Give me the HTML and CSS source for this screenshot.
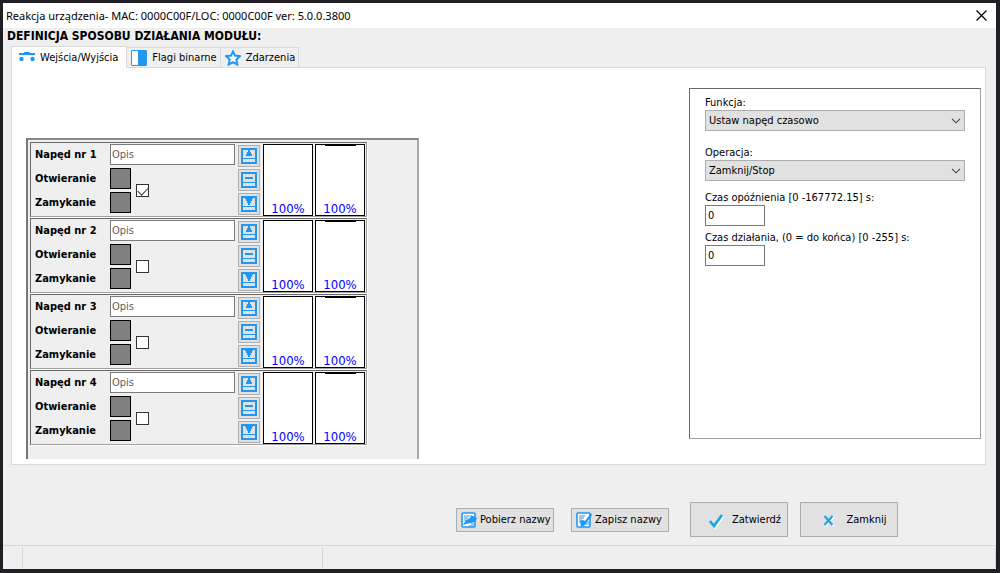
FILE: index.html
```html
<!DOCTYPE html>
<html lang="pl">
  <head>
    <meta charset="UTF-8" />
    <meta name="viewport" content="width=device-width, initial-scale=1.0" />
    <title>Reakcja urządzenia</title>
    <link rel="stylesheet" href="styles.css">
  </head>
  <body>
    <svg class="symbols" aria-hidden="true">
      <symbol id="icon-up" viewBox="0 0 16 16">
        <path d="M0 0h16v16H0zM2 2v8h12V2zM2 11v3h12v-3z" fill-rule="evenodd" />
        <path d="M7 2h2v2h1v2h1v2H5V6h1V4h1z" />
      </symbol>
      <symbol id="icon-stop" viewBox="0 0 16 16">
        <path d="M0 0h16v16H0zM2 2v8h12V2zM2 11v3h12v-3z" fill-rule="evenodd" />
        <path d="M4 5h8v2H4z" />
      </symbol>
      <symbol id="icon-down" viewBox="0 0 16 16">
        <path d="M0 0h16v16H0zM2 2v8h12V2zM2 11v3h12v-3z" fill-rule="evenodd" />
        <path d="M4 2h8v1h-1v2h-1v2H9v2H7V7H6V5H5V3H4z" />
      </symbol>
      <symbol id="icon-chevron" viewBox="0 0 10 6">
        <path d="M1 .8l4 4 4-4" fill="none" stroke="#444" stroke-width="1.1" />
      </symbol>
    </svg>

    <div class="window">
      <header class="titlebar">
        <span class="title">Reakcja urządzenia- MAC: 0000C00F/LOC: 0000C00F ver: 5.0.0.3800</span>
        <button class="close" type="button" aria-label="Zamknij okno">
          <svg width="11" height="11" viewBox="0 0 11 11"><path d="M.5 .5l10 10M10.5 .5l-10 10" stroke="#000" stroke-width="1.2" /></svg>
        </button>
      </header>

      <h1 class="heading">DEFINICJA SPOSOBU DZIAŁANIA MODUŁU:</h1>

      <div class="tabs" role="tablist">
        <button class="tab active" type="button" role="tab" aria-selected="true">
          <svg width="16" height="16" viewBox="0 0 16 16">
            <path d="M5 2h6v1h5v2H0V3h5z" />
            <circle cx="2.500" cy="9" r="2.200" />
            <circle cx="13.500" cy="9" r="2.200" />
          </svg>
          Wejścia/Wyjścia
        </button>
        <button class="tab" type="button" role="tab" aria-selected="false">
          <svg width="16" height="16" viewBox="0 0 16 16">
            <path d="M1 0h14l1 1v14l-1 1H1l-1-1V1z" />
            <path d="M1 1h6v14H1z" fill="#fff" />
          </svg>
          Flagi binarne
        </button>
        <button class="tab" type="button" role="tab" aria-selected="false">
          <svg width="16" height="16" viewBox="0 0 16 16">
            <path d="M8 1.400l1.900 4.200 5 .6-3.600 3.300 1 5.100L8 12.200l-4.300 2.400 1-5.100L1.100 6.200l5-.6z" fill="#fff" stroke="#2196f3" stroke-width="2" />
          </svg>
          Zdarzenia
        </button>
      </div>

      <main class="page">
        <div class="drives">
          <div class="drive">
            <label class="drive-label" for="drive-1">Napęd nr 1</label>
            <input class="drive-name" id="drive-1" type="text" placeholder="Opis">
            <div class="drive-label">Otwieranie</div>
            <div class="lamp"></div>
            <div class="drive-label">Zamykanie</div>
            <div class="lamp"></div>
            <div class="drive-check"><input type="checkbox" aria-label="Napęd nr 1 aktywny" checked></div>
            <div class="drive-buttons">
              <button type="button" aria-label="Otwórz"><svg><use href="#icon-up" /></svg></button>
              <button type="button" aria-label="Stop"><svg><use href="#icon-stop" /></svg></button>
              <button type="button" aria-label="Zamknij"><svg><use href="#icon-down" /></svg></button>
            </div>
            <div class="level">100%</div>
            <div class="level slat">100%</div>
          </div>

          <div class="drive">
            <label class="drive-label" for="drive-2">Napęd nr 2</label>
            <input class="drive-name" id="drive-2" type="text" placeholder="Opis">
            <div class="drive-label">Otwieranie</div>
            <div class="lamp"></div>
            <div class="drive-label">Zamykanie</div>
            <div class="lamp"></div>
            <div class="drive-check"><input type="checkbox" aria-label="Napęd nr 2 aktywny"></div>
            <div class="drive-buttons">
              <button type="button" aria-label="Otwórz"><svg><use href="#icon-up" /></svg></button>
              <button type="button" aria-label="Stop"><svg><use href="#icon-stop" /></svg></button>
              <button type="button" aria-label="Zamknij"><svg><use href="#icon-down" /></svg></button>
            </div>
            <div class="level">100%</div>
            <div class="level slat">100%</div>
          </div>

          <div class="drive">
            <label class="drive-label" for="drive-3">Napęd nr 3</label>
            <input class="drive-name" id="drive-3" type="text" placeholder="Opis">
            <div class="drive-label">Otwieranie</div>
            <div class="lamp"></div>
            <div class="drive-label">Zamykanie</div>
            <div class="lamp"></div>
            <div class="drive-check"><input type="checkbox" aria-label="Napęd nr 3 aktywny"></div>
            <div class="drive-buttons">
              <button type="button" aria-label="Otwórz"><svg><use href="#icon-up" /></svg></button>
              <button type="button" aria-label="Stop"><svg><use href="#icon-stop" /></svg></button>
              <button type="button" aria-label="Zamknij"><svg><use href="#icon-down" /></svg></button>
            </div>
            <div class="level">100%</div>
            <div class="level slat">100%</div>
          </div>

          <div class="drive">
            <label class="drive-label" for="drive-4">Napęd nr 4</label>
            <input class="drive-name" id="drive-4" type="text" placeholder="Opis">
            <div class="drive-label">Otwieranie</div>
            <div class="lamp"></div>
            <div class="drive-label">Zamykanie</div>
            <div class="lamp"></div>
            <div class="drive-check"><input type="checkbox" aria-label="Napęd nr 4 aktywny"></div>
            <div class="drive-buttons">
              <button type="button" aria-label="Otwórz"><svg><use href="#icon-up" /></svg></button>
              <button type="button" aria-label="Stop"><svg><use href="#icon-stop" /></svg></button>
              <button type="button" aria-label="Zamknij"><svg><use href="#icon-down" /></svg></button>
            </div>
            <div class="level">100%</div>
            <div class="level slat">100%</div>
          </div>
        </div>

        <form class="settings">
          <div class="field wide">
            <label for="function">Funkcja:</label>
            <div class="select">
              <select id="function"><option>Ustaw napęd czasowo</option></select>
              <svg class="chevron"><use href="#icon-chevron" /></svg>
            </div>
          </div>
          <div class="field">
            <label for="operation">Operacja:</label>
            <div class="select">
              <select id="operation"><option>Zamknij/Stop</option></select>
              <svg class="chevron"><use href="#icon-chevron" /></svg>
            </div>
          </div>
          <div class="field narrow">
            <label for="delay">Czas opóźnienia [0 -167772.15] s:</label>
            <input id="delay" type="text" value="0">
          </div>
          <div class="field">
            <label for="duration">Czas działania, (0 = do końca) [0 -255] s:</label>
            <input id="duration" type="text" value="0">
          </div>
        </form>
      </main>

      <div class="actions">
        <div class="names">
          <button class="small" type="button">
            <svg width="16" height="16" viewBox="0 0 16 16">
              <rect x="1" y="1" width="13" height="14" rx="1" fill="#fff" stroke="#2196f3" stroke-width="1.6" />
              <path d="M3 4h6M3 6h4M3 8h2M10 12h3M8 14h5" stroke="#2196f3" />
              <path d="M2 13l3-5 4-2 1-3 6 3-2 4-4 1-5 1z" />
            </svg>
            Pobierz nazwy
          </button>
          <button class="small" type="button">
            <svg width="16" height="16" viewBox="0 0 16 16">
              <rect x="1" y="1" width="13" height="14" rx="1" fill="#fff" stroke="#2196f3" stroke-width="1.6" />
              <path d="M3 4h6M3 6h5M3 8h3M3 10h2M11 10h2M10 12h3" stroke="#2196f3" />
              <path d="M15 1l1 2-5 7-2 3-4 2-1-6 3-1 2 1z" />
            </svg>
            Zapisz nazwy
          </button>
        </div>
        <button class="large" type="button">
          <svg width="16" height="16" viewBox="0 0 16 16">
            <path d="M1 10l4 5 8-11" fill="none" stroke="#fff" stroke-width="3" />
            <path d="M0 9l4 5 8-11" fill="none" stroke="#1ea5e0" stroke-width="2.800" />
          </svg>
          <span>Zatwierdź</span>
        </button>
        <button class="large" type="button">
          <svg width="16" height="16" viewBox="0 0 16 16">
            <path d="M5 5l9 9M14 5l-9 9" stroke="#fff" stroke-width="2" />
            <path d="M4.500 4l8 9M12.500 4l-8 9" stroke="#1ea5e0" stroke-width="2.200" />
          </svg>
          <span>Zamknij</span>
        </button>
      </div>

      <footer class="statusbar">
        <div></div>
        <div></div>
        <div></div>
      </footer>
    </div>
  </body>
</html>
```

FILE: styles.css
```css
* {
  box-sizing: border-box;
}
body {
  margin: 0;
  padding: 3px 4px 4px 3px;
  min-height: 100vh;
  display: flex;
  background-color: #202024;
  color: #000;
  font-family: "DejaVu Sans Condensed", "DejaVu Sans", sans-serif;
  font-size: 11px;
}
button,
input,
select {
  margin: 0;
  padding: 0;
  border-radius: 0;
  color: inherit;
  font: inherit;
}
svg {
  display: block;
  flex: none;
  fill: #2196f3;
}
.symbols {
  position: absolute;
  width: 0;
  height: 0;
}
.window {
  flex: 1;
  display: flex;
  flex-direction: column;
  background-color: #efefef;
}
.titlebar {
  display: flex;
  align-items: center;
  justify-content: space-between;
  height: 25px;
  padding: 0 9px 0 3px;
  background-color: #fff;
}
.title {
  font-family: "Noto Sans", "Open Sans", sans-serif;
  font-size: 11px;
}
.close {
  border: 0;
  background: none;
}
.heading {
  margin: 0;
  padding-left: 4px;
  height: 18px;
  font-size: 12px;
  line-height: 16px;
}

/* tabs */
.tabs {
  display: flex;
  align-items: flex-end;
  padding-left: 8px;
}
.tab {
  display: flex;
  align-items: center;
  gap: 5px;
  height: 20px;
  padding: 0 3px 0 4px;
  border: 1px solid #d9d9d9;
  border-left: 0;
  border-bottom: 0;
  background-color: #f0f0f0;
}
.tab.active {
  z-index: 1;
  height: 22px;
  margin-bottom: -1px;
  padding: 0 8px 0 7px;
  border-left: 1px solid #d9d9d9;
  background-color: #fff;
}
.page {
  flex: 1;
  display: flex;
  justify-content: space-between;
  margin: 0 10px 0 8px;
  padding: 20px 4px 5px 14px;
  border: 1px solid #d9d9d9;
  background-color: #fff;
}

/* drives */
.drives {
  width: 393px;
  margin-top: 50px;
  padding: 2px;
  border-style: solid;
  border-width: 2px 2px 0;
  border-color: #888 #a8a8a8 #888 #777;
  background-color: #efefef;
}
.drive {
  display: grid;
  grid-template-columns: 75px 26px 102px 25px 52px 50px;
  grid-template-rows: repeat(3, 24px);
  align-items: start;
  width: 337px;
  margin-bottom: 1px;
  padding: 1px 0 0 4px;
  border: 1px solid #a0a0a0;
  border-top-color: #696969;
  border-left-color: #696969;
  box-shadow: 1px 1px 0 #fff;
}
.drive-label {
  grid-column: 1;
  font-weight: bold;
  line-height: 21px;
}
.drive-name {
  grid-column: 2 / 4;
  width: 125px;
  height: 21px;
  padding: 0 1px;
  border: 1px solid #7a7a7a;
  background-color: #fff;
}
.drive-name::placeholder {
  color: #5d5d5d;
}
.lamp {
  grid-column: 2;
  width: 21px;
  height: 21px;
  border: 1px solid #000;
  background-color: #808080;
}
.drive-check {
  grid-column: 3;
  grid-row: 2 / 4;
  display: flex;
  align-items: center;
  height: 45px;
}
.drive-check input {
  appearance: none;
  width: 13px;
  height: 13px;
  border: 1px solid #333;
  background-color: #fff;
}
.drive-check input:checked::before {
  content: "";
  display: block;
  width: 9px;
  height: 5px;
  margin: 2px 1px;
  border-left: 1px solid #333;
  border-bottom: 1px solid #333;
  transform: rotate(-45deg);
}
.drive-buttons {
  grid-column: 4;
  grid-row: 1 / 4;
  display: flex;
  flex-direction: column;
  gap: 2px;
  width: 22px;
  padding-top: 1px;
}
.drive-buttons button {
  display: flex;
  align-items: center;
  justify-content: center;
  height: 22px;
  border: 1px solid #adadad;
  background-color: #e1e1e1;
}
.drive-buttons svg {
  width: 16px;
  height: 16px;
}
.level {
  grid-column: 5;
  grid-row: 1 / 4;
  display: flex;
  align-items: flex-end;
  justify-content: center;
  width: 50px;
  height: 72px;
  border: 1px solid #000;
  background-color: #fff;
  color: #0000ff;
  font-size: 13px;
  line-height: 13px;
}
.level.slat {
  grid-column: 6;
  background-image: linear-gradient(#000, #000);
  background-position: top center;
  background-repeat: no-repeat;
  background-size: 31px 1px;
}

/* settings */
.settings {
  display: flex;
  flex-direction: column;
  gap: 3px;
  width: 292px;
  margin-bottom: 20px;
  padding: 5px 15px;
  border: 1px solid #a0a0a0;
  border-top-color: #696969;
  border-left-color: #696969;
}
.field {
  display: flex;
  flex-direction: column;
  margin-bottom: 5px;
}
.field.wide {
  margin-bottom: 10px;
}
.field.narrow {
  margin-bottom: 0;
}
.field label {
  height: 16px;
  line-height: 18px;
}
.field input {
  width: 60px;
  height: 21px;
  padding: 0 2px;
  border: 1px solid #7a7a7a;
  background-color: #fff;
}
.select {
  display: grid;
  align-items: center;
}
.select select,
.select .chevron {
  grid-area: 1 / 1;
}
.select select {
  appearance: none;
  width: 100%;
  height: 21px;
  padding: 0 20px 0 3px;
  border: 1px solid #adadad;
  background-color: #e1e1e1;
}
.chevron {
  width: 10px;
  height: 6px;
  margin-right: 4px;
  justify-self: end;
  pointer-events: none;
}

/* bottom */
.actions {
  display: flex;
  align-items: center;
  justify-content: flex-end;
  gap: 12px;
  padding: 37px 98px 8px 0;
}
.names {
  display: flex;
  gap: 17px;
  margin-right: 9px;
}
.actions button {
  display: flex;
  align-items: center;
  width: 98px;
  border: 1px solid #adadad;
  background-color: #e1e1e1;
  white-space: nowrap;
}
.small {
  height: 24px;
  padding-left: 4px;
  gap: 3px;
}
.large {
  height: 35px;
  padding: 0 0 0 19px;
}
.large svg {
  overflow: visible;
}
.large span {
  flex: 1;
  text-align: center;
}
.statusbar {
  display: grid;
  grid-template-columns: 20px 300px 1fr;
  height: 24px;
  padding: 1px 0;
  border-top: 1px solid #d7d7d7;
}
.statusbar div {
  border-right: 1px solid #d7d7d7;
}
```
